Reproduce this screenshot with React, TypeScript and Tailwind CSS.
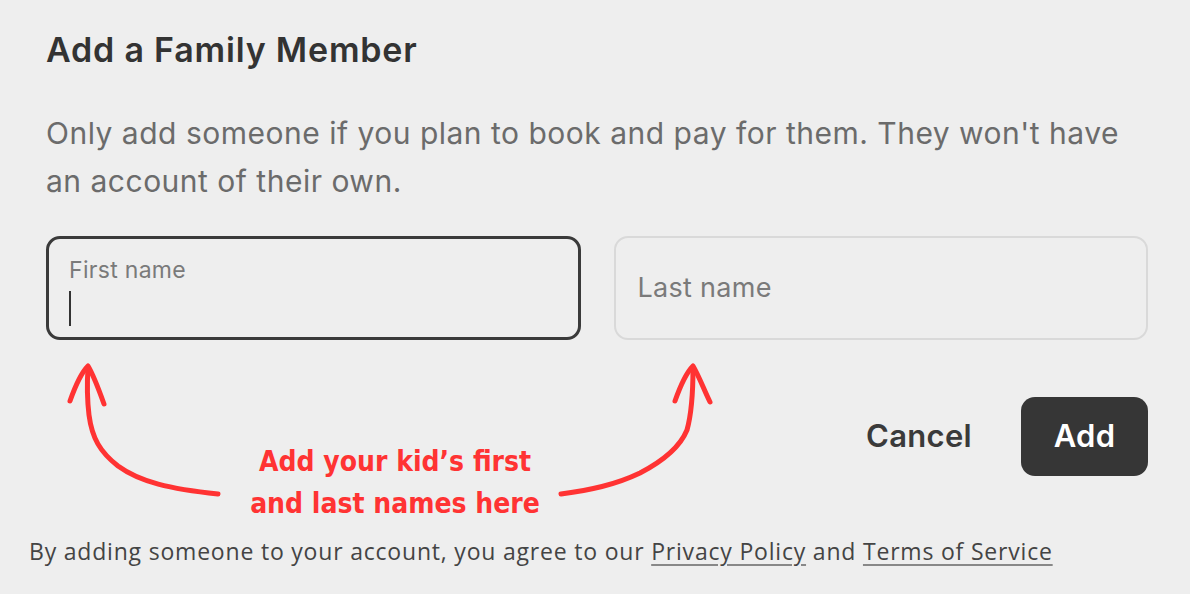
import React from 'react';

export default function App() {
  return (
    <div className="relative w-[1190px] h-[594px] overflow-hidden bg-[#eeeeee] font-['Inter',sans-serif]">
      <div className="pl-[46px] pr-[42px] pt-[30px]">
        {/* Header */}
        <h1 className="text-[34px] leading-[40px] tracking-[0.8px] font-semibold text-[#333333]">Add a Family Member</h1>
        <p className="mt-[39px] text-[30px] leading-[48px] tracking-[0.5px] text-[#6b6b6b]">
          Only add someone if you plan to book and pay for them. They won't have an account of their own.
        </p>

        {/* Inputs */}
        <div className="mt-[31px] grid grid-cols-2 gap-[33px]">
          <div className="h-[104px] rounded-[14px] border-[3px] border-[#3a3a3a] px-[20px] pt-[17px]">
            <div className="text-[23px] leading-[28px] tracking-[0.3px] text-[#7a7a7a]">First name</div>
            <div className="mt-[7px] h-[35px] w-[2px] bg-[#333333]" />
          </div>
          <div className="h-[104px] rounded-[14px] border-2 border-[#d9d9d9] px-[22px] flex items-center">
            <span className="text-[27px] tracking-[0.3px] text-[#7a7a7a]">Last name</span>
          </div>
        </div>

        {/* Actions + annotation */}
        <div className="relative mt-[57px] flex items-start justify-between">
          <div className="ml-[199px] mt-[44px] w-[300px] whitespace-nowrap text-center text-[28px] leading-[42px] font-bold font-stretch-condensed text-[#ff3333] font-['DejaVu_Sans',sans-serif]">
            Add your kid’s first
            <br />
            and last names here
          </div>
          <div className="flex items-center gap-[49px]">
            <button className="text-[31px] tracking-[0.3px] font-semibold text-[#3a3a3a]">Cancel</button>
            <button className="h-[79px] w-[127px] rounded-[14px] bg-[#363636] text-[31px] tracking-[0.3px] font-semibold text-white">Add</button>
          </div>
        </div>

        {/* Footer */}
        <p className="mt-[11px] -ml-[17px] whitespace-nowrap text-[23px] leading-[30px] tracking-[0.8px] text-[#444444] font-['Open_Sans',sans-serif]">
          By adding someone to your account, you agree to our{' '}
          <span className="underline underline-offset-4 decoration-[#888888]">Privacy Policy</span> and{' '}
          <span className="underline underline-offset-4 decoration-[#888888]">Terms of Service</span>
        </p>
      </div>

      {/* Arrows overlay */}
      <svg className="absolute left-0 top-0 pointer-events-none" width="1190" height="594" viewBox="0 0 1190 594" fill="none">
        <g stroke="#ff3333" strokeWidth="5" strokeLinecap="round" strokeLinejoin="round">
          <path d="M218 494 C170 489 140 482 118 466 C100 452 92 438 89 415 C87 398 87 383 88 368" />
          <path d="M70 401 C76 384 82 372 88 366 C94 376 99 390 104 404" />
          <path d="M561 494 C590 490 615 485 640 473 C665 460 680 447 687 430 C692 412 693 390 693 368" />
          <path d="M675 401 C681 384 687 372 693 366 C699 376 704 390 710 402" />
        </g>
      </svg>
    </div>
  );
}
